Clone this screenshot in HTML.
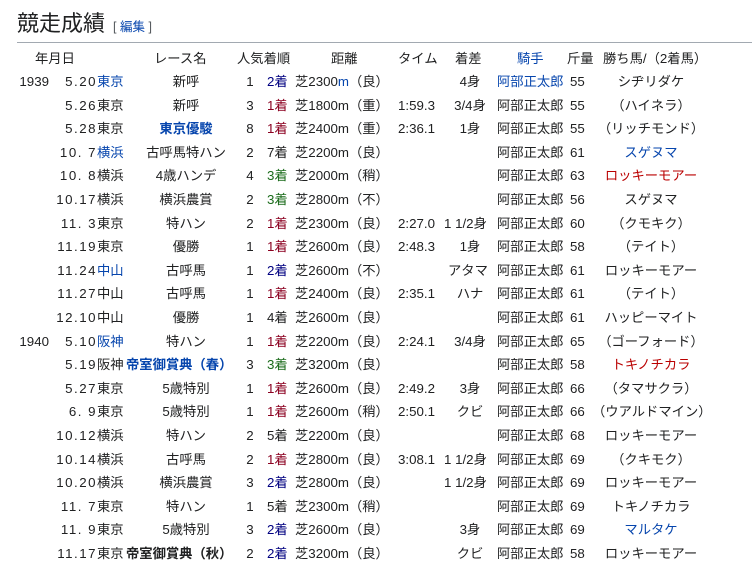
<!DOCTYPE html>
<html><head><meta charset="utf-8"><style>
body{margin:0;background:#fff;width:752px;height:585px;overflow:hidden;font-family:"Liberation Sans","Noto Sans CJK JP",sans-serif;color:#202122;font-size:13.3px}
h2{position:absolute;left:17px;top:8px;margin:0;font-weight:normal;font-size:22px;line-height:32px;font-family:"Liberation Sans","Noto Sans CJK JP",sans-serif}
.ed{font-size:12.5px;color:#54595d;margin-left:8px}
.ed a{color:#0645ad}
.hr{position:absolute;left:17px;right:0;top:42px;height:1px;background:#a2a9b1}
.r{position:absolute;left:0;width:752px;height:23px;line-height:23px;white-space:nowrap}
.r span{position:absolute;top:0}
.y{left:0;width:49px;text-align:right}
.d{left:48px;width:49px;text-align:right;letter-spacing:1.5px}
.k{left:97px}
.n{left:126px;width:120px;text-align:center}
.p{left:240px;width:20px;text-align:center}
.o{left:267px}
.s{left:295px}
.t{left:398px}
.m{left:440px;width:60px;text-align:center}
.j{left:497px}
.w{left:570px}
.v{left:592px;width:118px;text-align:center}
.b{color:#0645ad}.rl{color:#ba0000}
.o1{color:#8b0020}.o2{color:#000080}.o3{color:#1a6b1a}
.bd{font-weight:bold}
</style></head><body>
<h2>競走成績<span class="ed">[ <a>編集</a> ]</span></h2>
<div class="hr"></div>
<div class="r" style="top:47px"><span style="left:35px">年月日</span><span style="left:154px">レース名</span><span style="left:237px">人気着順</span><span style="left:331px">距離</span><span style="left:398px">タイム</span><span style="left:455px">着差</span><span class="b" style="left:517px">騎手</span><span style="left:567px">斤量</span><span style="left:603px">勝ち馬/（2着馬）</span></div>

<div class="r" style="top:70px"><span class="y">1939</span><span class="d">5.20</span><span class="k b">東京</span><span class="n">新呼</span><span class="p">1</span><span class="o o2">2着</span><span class="s">芝2300<span class="b" style="position:static">m</span>（良）</span><span class="m">4身</span><span class="j b">阿部正太郎</span><span class="w">55</span><span class="v">シヂリダケ</span></div>
<div class="r" style="top:93.6px"><span class="d">5.26</span><span class="k">東京</span><span class="n">新呼</span><span class="p">3</span><span class="o o1">1着</span><span class="s">芝1800m（重）</span><span class="t">1:59.3</span><span class="m">3/4身</span><span class="j">阿部正太郎</span><span class="w">55</span><span class="v">（ハイネラ）</span></div>
<div class="r" style="top:117.2px"><span class="d">5.28</span><span class="k">東京</span><span class="n b bd">東京優駿</span><span class="p">8</span><span class="o o1">1着</span><span class="s">芝2400m（重）</span><span class="t">2:36.1</span><span class="m">1身</span><span class="j">阿部正太郎</span><span class="w">55</span><span class="v">（リッチモンド）</span></div>
<div class="r" style="top:140.8px"><span class="d">10. 7</span><span class="k b">横浜</span><span class="n">古呼馬特ハン</span><span class="p">2</span><span class="o">7着</span><span class="s">芝2200m（良）</span><span class="j">阿部正太郎</span><span class="w">61</span><span class="v b">スゲヌマ</span></div>
<div class="r" style="top:164.4px"><span class="d">10. 8</span><span class="k">横浜</span><span class="n">4歳ハンデ</span><span class="p">4</span><span class="o o3">3着</span><span class="s">芝2000m（稍）</span><span class="j">阿部正太郎</span><span class="w">63</span><span class="v rl">ロッキーモアー</span></div>
<div class="r" style="top:188px"><span class="d">10.17</span><span class="k">横浜</span><span class="n">横浜農賞</span><span class="p">2</span><span class="o o3">3着</span><span class="s">芝2800m（不）</span><span class="j">阿部正太郎</span><span class="w">56</span><span class="v">スゲヌマ</span></div>
<div class="r" style="top:211.6px"><span class="d">11. 3</span><span class="k">東京</span><span class="n">特ハン</span><span class="p">2</span><span class="o o1">1着</span><span class="s">芝2300m（良）</span><span class="t">2:27.0</span><span class="m" style="left:444px;width:auto">1 1/2身</span><span class="j">阿部正太郎</span><span class="w">60</span><span class="v">（クモキク）</span></div>
<div class="r" style="top:235.2px"><span class="d">11.19</span><span class="k">東京</span><span class="n">優勝</span><span class="p">1</span><span class="o o1">1着</span><span class="s">芝2600m（良）</span><span class="t">2:48.3</span><span class="m">1身</span><span class="j">阿部正太郎</span><span class="w">58</span><span class="v">（テイト）</span></div>
<div class="r" style="top:258.8px"><span class="d">11.24</span><span class="k b">中山</span><span class="n">古呼馬</span><span class="p">1</span><span class="o o2">2着</span><span class="s">芝2600m（不）</span><span class="m" style="left:448px;width:auto">アタマ</span><span class="j">阿部正太郎</span><span class="w">61</span><span class="v">ロッキーモアー</span></div>
<div class="r" style="top:282.4px"><span class="d">11.27</span><span class="k">中山</span><span class="n">古呼馬</span><span class="p">1</span><span class="o o1">1着</span><span class="s">芝2400m（良）</span><span class="t">2:35.1</span><span class="m">ハナ</span><span class="j">阿部正太郎</span><span class="w">61</span><span class="v">（テイト）</span></div>
<div class="r" style="top:306px"><span class="d">12.10</span><span class="k">中山</span><span class="n">優勝</span><span class="p">1</span><span class="o">4着</span><span class="s">芝2600m（良）</span><span class="j">阿部正太郎</span><span class="w">61</span><span class="v">ハッピーマイト</span></div>
<div class="r" style="top:329.6px"><span class="y">1940</span><span class="d">5.10</span><span class="k b">阪神</span><span class="n">特ハン</span><span class="p">1</span><span class="o o1">1着</span><span class="s">芝2200m（良）</span><span class="t">2:24.1</span><span class="m">3/4身</span><span class="j">阿部正太郎</span><span class="w">65</span><span class="v">（ゴーフォード）</span></div>
<div class="r" style="top:353.2px"><span class="d">5.19</span><span class="k">阪神</span><span class="n b bd" style="left:126px;width:auto">帝室御賞典（春）</span><span class="p">3</span><span class="o o3">3着</span><span class="s">芝3200m（良）</span><span class="j">阿部正太郎</span><span class="w">58</span><span class="v rl">トキノチカラ</span></div>
<div class="r" style="top:376.8px"><span class="d">5.27</span><span class="k">東京</span><span class="n">5歳特別</span><span class="p">1</span><span class="o o1">1着</span><span class="s">芝2600m（良）</span><span class="t">2:49.2</span><span class="m">3身</span><span class="j">阿部正太郎</span><span class="w">66</span><span class="v">（タマサクラ）</span></div>
<div class="r" style="top:400.4px"><span class="d">6. 9</span><span class="k">東京</span><span class="n">5歳特別</span><span class="p">1</span><span class="o o1">1着</span><span class="s">芝2600m（稍）</span><span class="t">2:50.1</span><span class="m">クビ</span><span class="j">阿部正太郎</span><span class="w">66</span><span class="v">（ウアルドマイン）</span></div>
<div class="r" style="top:424px"><span class="d">10.12</span><span class="k">横浜</span><span class="n">特ハン</span><span class="p">2</span><span class="o">5着</span><span class="s">芝2200m（良）</span><span class="j">阿部正太郎</span><span class="w">68</span><span class="v">ロッキーモアー</span></div>
<div class="r" style="top:447.6px"><span class="d">10.14</span><span class="k">横浜</span><span class="n">古呼馬</span><span class="p">2</span><span class="o o1">1着</span><span class="s">芝2800m（良）</span><span class="t">3:08.1</span><span class="m" style="left:444px;width:auto">1 1/2身</span><span class="j">阿部正太郎</span><span class="w">69</span><span class="v">（クキモク）</span></div>
<div class="r" style="top:471.2px"><span class="d">10.20</span><span class="k">横浜</span><span class="n">横浜農賞</span><span class="p">3</span><span class="o o2">2着</span><span class="s">芝2800m（良）</span><span class="m" style="left:444px;width:auto">1 1/2身</span><span class="j">阿部正太郎</span><span class="w">69</span><span class="v">ロッキーモアー</span></div>
<div class="r" style="top:494.8px"><span class="d">11. 7</span><span class="k">東京</span><span class="n">特ハン</span><span class="p">1</span><span class="o">5着</span><span class="s">芝2300m（稍）</span><span class="j">阿部正太郎</span><span class="w">69</span><span class="v">トキノチカラ</span></div>
<div class="r" style="top:518.4px"><span class="d">11. 9</span><span class="k">東京</span><span class="n">5歳特別</span><span class="p">3</span><span class="o o2">2着</span><span class="s">芝2600m（良）</span><span class="m">3身</span><span class="j">阿部正太郎</span><span class="w">69</span><span class="v b">マルタケ</span></div>
<div class="r" style="top:542px"><span class="d">11.17</span><span class="k">東京</span><span class="n bd" style="left:126px;width:auto">帝室御賞典（秋）</span><span class="p">2</span><span class="o o2">2着</span><span class="s">芝3200m（良）</span><span class="m">クビ</span><span class="j">阿部正太郎</span><span class="w">58</span><span class="v">ロッキーモアー</span></div>
</body></html>
